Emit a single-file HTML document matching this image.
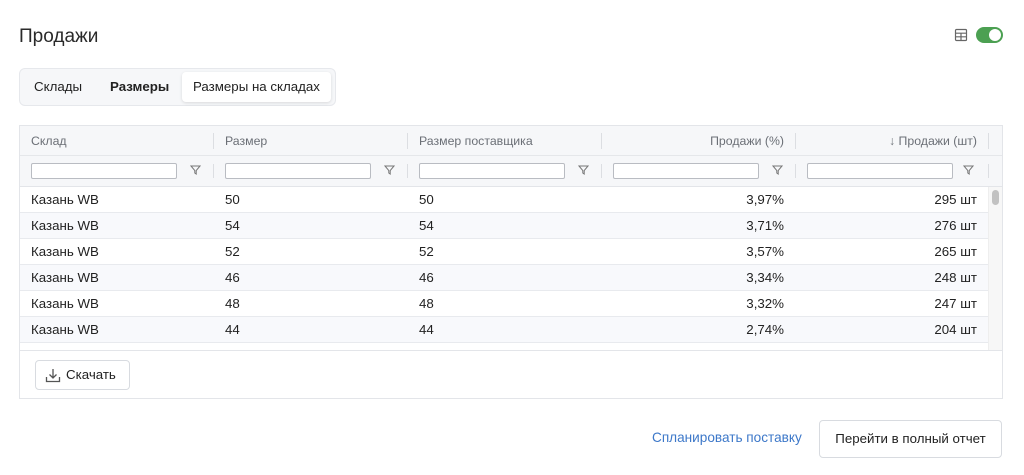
<!DOCTYPE html>
<html><head><meta charset="utf-8"><style>
*{box-sizing:border-box;margin:0;padding:0}
body{width:1024px;height:475px;background:#fff;font-family:"Liberation Sans",sans-serif;color:#222;position:relative;overflow:hidden}
.abs{position:absolute}
h1{position:absolute;left:19px;top:26px;font-size:19px;font-weight:normal;color:#2a2a2a}
.tabs{left:19px;top:68px;width:317px;height:38px;background:#f6f7f9;border:1px solid #e6e8ec;border-radius:6px}
.tab{position:absolute;top:0;height:36px;line-height:36px;font-size:13.3px;color:#222}
.tab.on{background:#fff;border-radius:4px;top:3px;height:30px;line-height:30px;box-shadow:0 1px 3px rgba(0,0,0,.12);padding:0 11px;left:162px}
.tbl{left:19px;top:125px;width:984px;height:274px;border:1px solid #e3e5e9}
.hdr{left:0;top:0;width:982px;height:30px;background:#f6f7f9;border-bottom:1px solid #e5e7ea}
.flt{left:0;top:30px;width:982px;height:31px;background:#f6f7f9;border-bottom:1px solid #e3e5e9}
.hc{position:absolute;top:0;height:30px;line-height:30px;font-size:12.3px;color:#6b6f76}
.sep{position:absolute;width:1px;background:#dcdee2}
.inp{position:absolute;top:7px;width:146px;height:16px;border:1px solid #b9bcc2;background:#fff;border-radius:2px}
.fi{position:absolute;top:9px}
.row{position:absolute;left:0;width:968px;height:26px;border-bottom:1px solid #e8eaee;font-size:13.3px;line-height:26px}
.row.alt{background:#f8f9fc}
.c{position:absolute;top:0}
.r{text-align:right}
.btn{position:absolute;border:1px solid #d8dbe0;border-radius:4px;background:#fff;font-size:13.3px}
</style></head><body>
<h1>Продажи</h1>
<svg class="abs" style="left:954px;top:28px" width="14" height="14" viewBox="0 0 14 14"><rect x="1.5" y="1.5" width="11" height="11" fill="none" stroke="#666" stroke-width="1.2" rx="1"/><path d="M1.5 5.2H12.5M1.5 8.8H12.5M7 5.2V12.5" stroke="#666" stroke-width="1.2"/></svg>
<div class="abs" style="left:976px;top:27px;width:27px;height:16px;border-radius:8px;background:#4ca052"><div style="position:absolute;right:2px;top:2px;width:12px;height:12px;border-radius:50%;background:#fff"></div></div>
<div class="abs tabs">
<div class="tab" style="left:14px">Склады</div>
<div class="tab" style="left:90px;font-weight:bold">Размеры</div>
<div class="tab on">Размеры на складах</div>
</div>
<div class="abs tbl">
<div class="abs hdr">
<div class="hc" style="left:11px">Склад</div>
<div class="hc" style="left:205px">Размер</div>
<div class="hc" style="left:399px">Размер поставщика</div>
<div class="hc" style="right:218px">Продажи (%)</div>
<div class="hc" style="right:25px">↓ Продажи (шт)</div>
<div class="sep" style="left:193px;top:7px;height:16px"></div>
<div class="sep" style="left:387px;top:7px;height:16px"></div>
<div class="sep" style="left:581px;top:7px;height:16px"></div>
<div class="sep" style="left:775px;top:7px;height:16px"></div>
<div class="sep" style="left:968px;top:7px;height:16px"></div>
</div>
<div class="abs flt">
<div class="inp" style="left:11px"></div><div class="inp" style="left:205px"></div><div class="inp" style="left:399px"></div><div class="inp" style="left:593px"></div><div class="inp" style="left:787px"></div>
<svg class="fi" style="left:170px" width="11" height="10" viewBox="0 0 11 10"><path d="M1 1H10L6.2 5.5V9L4.8 8V5.5Z" fill="none" stroke="#777" stroke-width="1"/></svg>
<svg class="fi" style="left:364px" width="11" height="10" viewBox="0 0 11 10"><path d="M1 1H10L6.2 5.5V9L4.8 8V5.5Z" fill="none" stroke="#777" stroke-width="1"/></svg>
<svg class="fi" style="left:558px" width="11" height="10" viewBox="0 0 11 10"><path d="M1 1H10L6.2 5.5V9L4.8 8V5.5Z" fill="none" stroke="#777" stroke-width="1"/></svg>
<svg class="fi" style="left:752px" width="11" height="10" viewBox="0 0 11 10"><path d="M1 1H10L6.2 5.5V9L4.8 8V5.5Z" fill="none" stroke="#777" stroke-width="1"/></svg>
<svg class="fi" style="left:943px" width="11" height="10" viewBox="0 0 11 10"><path d="M1 1H10L6.2 5.5V9L4.8 8V5.5Z" fill="none" stroke="#777" stroke-width="1"/></svg>
<div class="sep" style="left:193px;top:8px;height:14px"></div><div class="sep" style="left:387px;top:8px;height:14px"></div><div class="sep" style="left:581px;top:8px;height:14px"></div><div class="sep" style="left:775px;top:8px;height:14px"></div><div class="sep" style="left:968px;top:8px;height:14px"></div>
</div>
<div class="abs" style="left:0;top:61px;width:982px;height:164px;overflow:hidden;border-bottom:1px solid #e3e5e9">
<div class="row" style="top:0"><span class="c" style="left:11px">Казань WB</span><span class="c" style="left:205px">50</span><span class="c" style="left:399px">50</span><span class="c r" style="right:204px">3,97%</span><span class="c r" style="right:11px">295 шт</span></div>
<div class="row alt" style="top:26px"><span class="c" style="left:11px">Казань WB</span><span class="c" style="left:205px">54</span><span class="c" style="left:399px">54</span><span class="c r" style="right:204px">3,71%</span><span class="c r" style="right:11px">276 шт</span></div>
<div class="row" style="top:52px"><span class="c" style="left:11px">Казань WB</span><span class="c" style="left:205px">52</span><span class="c" style="left:399px">52</span><span class="c r" style="right:204px">3,57%</span><span class="c r" style="right:11px">265 шт</span></div>
<div class="row alt" style="top:78px"><span class="c" style="left:11px">Казань WB</span><span class="c" style="left:205px">46</span><span class="c" style="left:399px">46</span><span class="c r" style="right:204px">3,34%</span><span class="c r" style="right:11px">248 шт</span></div>
<div class="row" style="top:104px"><span class="c" style="left:11px">Казань WB</span><span class="c" style="left:205px">48</span><span class="c" style="left:399px">48</span><span class="c r" style="right:204px">3,32%</span><span class="c r" style="right:11px">247 шт</span></div>
<div class="row alt" style="top:130px"><span class="c" style="left:11px">Казань WB</span><span class="c" style="left:205px">44</span><span class="c" style="left:399px">44</span><span class="c r" style="right:204px">2,74%</span><span class="c r" style="right:11px">204 шт</span></div>
<div class="row" style="top:156px"></div>
<div class="abs" style="left:968px;top:0;width:14px;height:164px;background:#f7f7f7;border-left:1px solid #eee"><div style="position:absolute;left:3px;top:3px;width:7px;height:15px;border-radius:4px;background:#c2c2c2"></div></div>
</div>
<div class="btn" style="left:15px;top:234px;width:95px;height:30px;line-height:28px;padding-left:30px">Скачать
<svg style="position:absolute;left:9px;top:7px" width="16" height="15" viewBox="0 0 16 15"><path d="M8 1V10M4.5 6.5L8 10L11.5 6.5M1.5 9V13.5H14.5V9" fill="none" stroke="#555" stroke-width="1.3"/></svg></div>
</div>
<div class="abs" style="left:652px;top:430px;font-size:13.6px;color:#3d78c9">Спланировать поставку</div>
<div class="btn" style="left:819px;top:420px;width:183px;height:38px;line-height:36px;text-align:center">Перейти в полный отчет</div>
</body></html>
